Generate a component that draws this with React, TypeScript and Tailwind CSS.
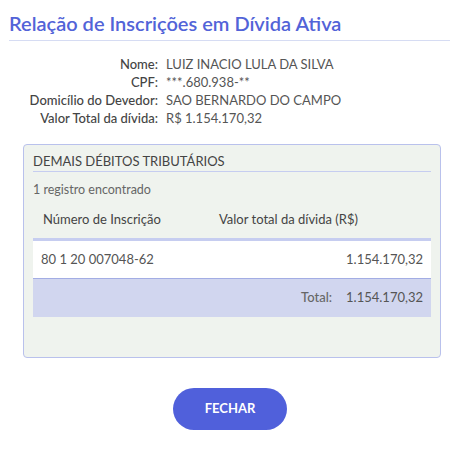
import React from 'react';

const info = [
  { label: 'Nome:', value: 'LUIZ INACIO LULA DA SILVA' },
  { label: 'CPF:', value: '***.680.938-**' },
  { label: 'Domicílio do Devedor:', value: 'SAO BERNARDO DO CAMPO' },
  { label: 'Valor Total da dívida:', value: 'R$ 1.154.170,32' },
];

export default function App() {
  return (
    <div className="w-[450px] h-[450px] bg-white font-['Lato','Open_Sans',sans-serif] text-[#555]">
      <div className="pl-[9px] pt-[11px]">
        <h1 className="text-[20px] leading-[25px] font-semibold text-[#5263d8] pb-[4px] border-b border-[#d6dcf3]">
          Relação de Inscrições em Dívida Ativa
        </h1>
      </div>

      <div className="mt-[14px] flex flex-col">
        {info.map((row) => (
          <div key={row.label} className="flex text-[13px] leading-[18px] h-[18px]">
            <span className="w-[158px] text-right text-[#444] font-medium">{row.label}</span>
            <span className="ml-[8px] text-[#555]">{row.value}</span>
          </div>
        ))}
      </div>

      <div className="ml-[23px] w-[418px] mt-[17px] h-[214px] rounded-[4px] border border-[#b9c1ec] bg-[#eff3ee] px-[9px] pt-[7px]">
        <div className="text-[13px] leading-[18px] text-[#444] border-b border-[#c6cdf0] pb-[1px]">
          DEMAIS DÉBITOS TRIBUTÁRIOS
        </div>
        <div className="mt-[10px] text-[12.5px] leading-[16px] text-[#666]">1 registro encontrado</div>
        <div className="mt-[12px] flex text-[13px] leading-[18px] text-[#444] pl-[10px]">
          <span className="w-[176px]">Número de Inscrição</span>
          <span>Valor total da dívida (R$)</span>
        </div>
        <div className="mt-[10px] border-t-[3px] border-[#c6cdf0]">
          <div className="h-[37px] bg-white flex items-center justify-between px-[8px] text-[13px] text-[#555]">
            <span>80 1 20 007048-62</span>
            <span>1.154.170,32</span>
          </div>
          <div className="h-[39px] bg-[#d1d6ef] border-t border-[#a3ade4] flex items-center justify-end px-[8px] text-[13px] text-[#555]">
            <span className="text-[#666] font-medium mr-[14px]">Total:</span>
            <span>1.154.170,32</span>
          </div>
        </div>
      </div>

      <div className="flex justify-center mt-[30px] pl-[10px]">
        <button className="w-[114px] h-[42px] rounded-full bg-[#5060db] text-white text-[13px] font-bold">
          FECHAR
        </button>
      </div>
    </div>
  );
}
